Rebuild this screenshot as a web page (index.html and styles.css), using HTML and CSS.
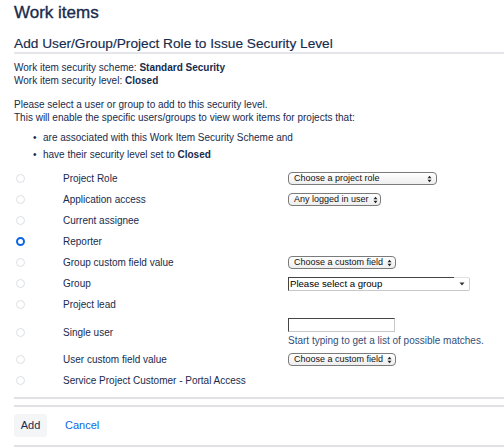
FILE: index.html
```html
<!DOCTYPE html>
<html lang="en">
<head>
<meta charset="utf-8">
<title>Work items</title>
<link rel="stylesheet" href="styles.css">
</head>
<body>
<div class="page">
  <h1 class="title">Work items</h1>
  <h2 class="subtitle">Add User/Group/Project Role to Issue Security Level</h2>
  <p class="info">Work item security scheme: <b>Standard Security</b><br>Work item security level: <b>Closed</b></p>
  <p class="info gap">Please select a user or group to add to this security level.<br>This will enable the specific users/groups to view work items for projects that:</p>
  <ul class="conds">
    <li>are associated with this Work Item Security Scheme and</li>
    <li>have their security level set to <b>Closed</b></li>
  </ul>
  <div class="types">
    <div class="row">
      <span class="radio"></span>
      <span class="label">Project Role</span>
      <span class="ctrl"><span class="select w1"><span class="sel-text">Choose a project role</span><span class="updown"><svg width="5" height="8" viewBox="0 0 5 8"><path d="M0.5 3.2 L2.5 0.8 L4.5 3.2 Z M0.5 4.8 L2.5 7.2 L4.5 4.8 Z" fill="#222"/></svg></span></span></span>
    </div>
    <div class="row">
      <span class="radio"></span>
      <span class="label">Application access</span>
      <span class="ctrl"><span class="select w2"><span class="sel-text">Any logged in user</span><span class="updown"><svg width="5" height="8" viewBox="0 0 5 8"><path d="M0.5 3.2 L2.5 0.8 L4.5 3.2 Z M0.5 4.8 L2.5 7.2 L4.5 4.8 Z" fill="#222"/></svg></span></span></span>
    </div>
    <div class="row">
      <span class="radio"></span>
      <span class="label">Current assignee</span>
      <span class="ctrl"></span>
    </div>
    <div class="row">
      <span class="radio checked"></span>
      <span class="label">Reporter</span>
      <span class="ctrl"></span>
    </div>
    <div class="row">
      <span class="radio"></span>
      <span class="label">Group custom field value</span>
      <span class="ctrl"><span class="select w3"><span class="sel-text">Choose a custom field</span><span class="updown"><svg width="5" height="8" viewBox="0 0 5 8"><path d="M0.5 3.2 L2.5 0.8 L4.5 3.2 Z M0.5 4.8 L2.5 7.2 L4.5 4.8 Z" fill="#222"/></svg></span></span></span>
    </div>
    <div class="row">
      <span class="radio"></span>
      <span class="label">Group</span>
      <span class="ctrl"><span class="combo"><span class="combo-text">Please select a group</span><span class="combo-btn"><svg width="6" height="4" viewBox="0 0 6 4"><path d="M0.5 0.5 L5.5 0.5 L3 3.5 Z" fill="#333"/></svg></span></span></span>
    </div>
    <div class="row">
      <span class="radio"></span>
      <span class="label">Project lead</span>
      <span class="ctrl"></span>
    </div>
    <div class="row tall">
      <span class="radio"></span>
      <span class="label">Single user</span>
      <span class="ctrl stack"><span class="textbox"></span><span class="help">Start typing to get a list of possible matches.</span></span>
    </div>
    <div class="row">
      <span class="radio"></span>
      <span class="label">User custom field value</span>
      <span class="ctrl"><span class="select w3"><span class="sel-text">Choose a custom field</span><span class="updown"><svg width="5" height="8" viewBox="0 0 5 8"><path d="M0.5 3.2 L2.5 0.8 L4.5 3.2 Z M0.5 4.8 L2.5 7.2 L4.5 4.8 Z" fill="#222"/></svg></span></span></span>
    </div>
    <div class="row">
      <span class="radio"></span>
      <span class="label">Service Project Customer - Portal Access</span>
      <span class="ctrl"></span>
    </div>
  </div>
  <div class="buttons">
    <span class="btn">Add</span>
    <a class="cancel" href="#">Cancel</a>
  </div>
</div>
</body>
</html>
```

FILE: styles.css
```css
* { box-sizing: border-box; }
html, body { margin: 0; padding: 0; background: #fff; }
body {
  font-family: "Liberation Sans", Arial, sans-serif;
  color: #172b4d;
  font-size: 10px;
  line-height: 13px;
}
.page { padding-left: 14px; }

.title {
  margin: 3px 0 0;
  font-size: 17px;
  line-height: 20px;
  font-weight: normal;
  -webkit-text-stroke: 0.35px #172b4d;
}
.subtitle {
  margin: 13px 0 0;
  font-size: 13.7px;
  line-height: 16px;
  font-weight: normal;
  -webkit-text-stroke: 0.15px #172b4d;
  border-bottom: 2px solid #e4e6ea;
}
.info { margin: 7px 0 0; }
.info.gap { margin-top: 11px; }
.info b { font-weight: bold; }

.conds {
  list-style: none;
  margin: 5px 0 0;
  padding: 0;
}
.conds li {
  line-height: 17px;
  padding-left: 29px;
}
.conds li::before {
  content: "\2022";
  display: inline-block;
  width: 10px;
  margin-left: -10px;
}

.types {
  margin-top: 5px;
  padding-bottom: 6px;
  border-bottom: 2px solid #dfe1e6;
}
.row {
  display: grid;
  grid-template-columns: 49px 225px 1fr;
  align-items: center;
  min-height: 21px;
}
.row.tall { min-height: 34px; }
.radio {
  width: 9px;
  height: 9px;
  margin-left: 2px;
  border-radius: 50%;
  border: 1px solid #dcdfe4;
  background: #fff;
}
.radio.checked {
  border: 2.5px solid #0c66e4;
  background: #fff;
}
.label { color: #172b4d; white-space: nowrap; }
.ctrl { display: flex; align-items: center; }
.ctrl.stack { flex-direction: column; align-items: flex-start; gap: 2px; }

.select {
  display: flex;
  align-items: center;
  justify-content: space-between;
  gap: 4px;
  height: 13px;
  padding: 0 4px 0 5px;
  border: 1px solid #7b7b7b;
  border-radius: 4px;
  background: linear-gradient(#ffffff, #eeeeee);
  color: #111;
  font-size: 9px;
  line-height: 11px;
  white-space: nowrap;
}
.sel-text { flex: none; }
.select.w1 { width: 149px; }
.select.w2 { width: 93px; }
.select.w3 { width: 108px; }
.updown { display: flex; align-items: center; flex: none; }

.combo {
  display: flex;
  width: 182px;
  height: 14px;
}
.combo-text {
  flex: 1;
  border-top: 1px solid #444;
  border-left: 1px solid #444;
  border-bottom: 1px solid #c8c8c8;
  padding-left: 1px;
  color: #000;
  font-size: 9.6px;
  line-height: 12px;
  white-space: nowrap;
}
.combo-btn {
  width: 16px;
  display: flex;
  align-items: center;
  justify-content: center;
  border-top: 1px solid #e2e2e2;
  border-right: 1px solid #d0d0d0;
  border-bottom: 1px solid #c8c8c8;
  border-radius: 0 2px 2px 0;
  background: #fff;
}

.textbox {
  width: 107px;
  height: 14px;
  border-top: 1px solid #444;
  border-left: 1px solid #444;
  border-right: 1px solid #c8c8c8;
  border-bottom: 1px solid #c8c8c8;
  background: #fff;
}
.help { color: #344e77; font-size: 10px; line-height: 13px; white-space: nowrap; }

.buttons {
  margin-top: 6px;
  border-top: 2px solid #dfe1e6;
  border-bottom: 2px solid #dfe1e6;
  padding: 7px 0 8px;
  display: flex;
  align-items: center;
  gap: 18px;
}
.btn {
  display: inline-flex;
  align-items: center;
  justify-content: center;
  width: 33px;
  height: 23px;
  background: #f4f5f7;
  border-radius: 3px;
  color: #172b4d;
  font-size: 11px;
}
.cancel {
  color: #0c66e4;
  text-decoration: none;
  font-size: 11px;
}
```
